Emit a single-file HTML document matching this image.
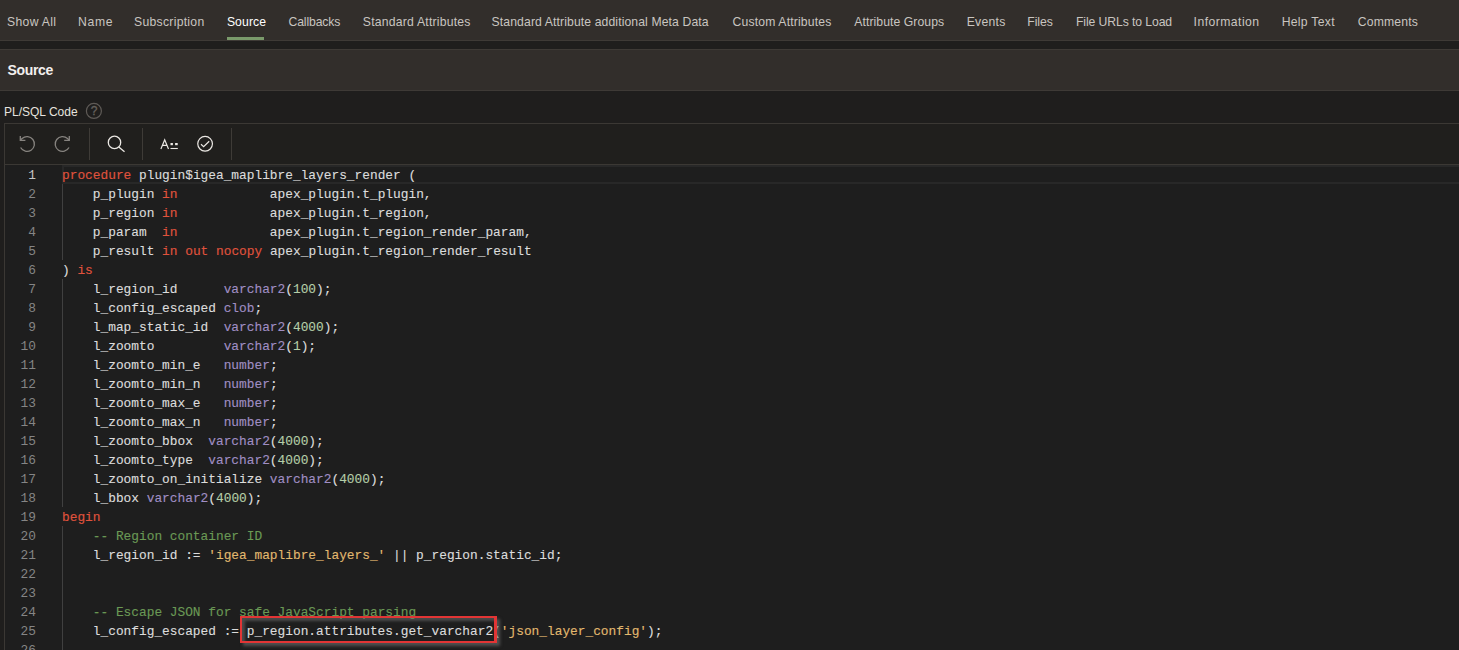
<!DOCTYPE html>
<html><head><meta charset="utf-8">
<style>
html,body{margin:0;padding:0;}
body{width:1459px;height:650px;overflow:hidden;background:#1f1e1d;position:relative;font-family:"Liberation Sans",sans-serif;}
.tabs{position:absolute;left:0;top:0;width:1459px;height:40px;background:#322e2b;border-bottom:1px solid #3e3a36;}
.tab{position:absolute;top:0;height:40px;line-height:44px;font-size:12.2px;color:#c9c5c0;white-space:pre;}
.tab.act{color:#ffffff;width:37px;}
.tab.act::after{content:"";position:absolute;left:0;right:0;top:37px;height:3px;background:#7a9a6b;}
.gap{position:absolute;left:0;top:41px;width:1459px;height:8px;background:#1f1e1d;}
.sect{position:absolute;left:0;top:49px;width:1459px;height:40px;background:#322e2b;border-top:1px solid #3e3a36;border-bottom:1px solid #3e3a36;}
.sect span{position:absolute;left:7.5px;top:0;line-height:41px;font-size:14px;letter-spacing:-0.35px;font-weight:bold;color:#f2f0ee;}
.lbl{position:absolute;left:4px;top:103px;font-size:12px;line-height:18px;color:#e6e3df;}
.help{position:absolute;left:86px;top:103px;width:16px;height:16px;}
.help span{position:absolute;left:0;right:0;top:0;text-align:center;font-size:12px;line-height:17px;color:#66625d;-webkit-text-stroke:0.3px currentColor;}
.editor{position:absolute;left:4px;top:123px;width:1460px;height:540px;border-top:1px solid #3b3834;border-left:1px solid #3b3834;background:#1e1e1e;}
.tb{position:absolute;left:0;top:0;width:100%;height:40px;background:#201f1d;border-bottom:1px solid #3b3834;}
.sep{position:absolute;top:4px;width:1px;height:32px;background:#3e3b37;}
.tb svg{position:absolute;left:0;top:0;}
.code{position:absolute;left:0;top:41px;width:100%;height:500px;}
.ln{position:absolute;left:0;margin-top:1px;width:31px;text-align:right;color:#858585;}
.code div.ln.act{color:#c6c6c6;}
.cl{position:absolute;left:57px;margin-top:1px;white-space:pre;color:#dcdcdc;-webkit-text-stroke:0.12px currentColor;}
.code div{font-family:"Liberation Mono",monospace;font-size:12.83px;height:19px;line-height:19px;}
.k{color:#e0533d}.t{color:#a08ec4}.n{color:#b5cea8}.s{color:#e2b96f}.c{color:#6a9955}
.code div.curline{position:absolute;left:57px;top:0;width:1400px;height:15px;line-height:15px;border:2px solid #282828;}
.guide{position:absolute;width:1px;background:#404040;}
.box{position:absolute;left:240px;top:616px;width:252px;height:23px;border:2.5px solid #e23535;border-right-width:3px;box-shadow:3px 3px 3px rgba(120,120,120,.55), inset 3px 3px 3px rgba(120,120,120,.5);}
</style></head><body>
<div class="tabs">
<div class="tab" style="left:7.00px;letter-spacing:0.329px">Show All</div>
<div class="tab" style="left:78.10px;letter-spacing:0.667px">Name</div>
<div class="tab" style="left:134.10px;letter-spacing:0.273px">Subscription</div>
<div class="tab act" style="left:226.90px;letter-spacing:0.100px">Source</div>
<div class="tab" style="left:288.50px;letter-spacing:-0.125px">Callbacks</div>
<div class="tab" style="left:362.80px;letter-spacing:0.222px">Standard Attributes</div>
<div class="tab" style="left:491.60px;letter-spacing:0.111px">Standard Attribute additional Meta Data</div>
<div class="tab" style="left:732.50px;letter-spacing:0.163px">Custom Attributes</div>
<div class="tab" style="left:854.30px;letter-spacing:0.073px">Attribute Groups</div>
<div class="tab" style="left:966.70px;letter-spacing:0.260px">Events</div>
<div class="tab" style="left:1027.20px;letter-spacing:0.000px">Files</div>
<div class="tab" style="left:1076.00px;letter-spacing:-0.088px">File URLs to Load</div>
<div class="tab" style="left:1193.60px;letter-spacing:0.450px">Information</div>
<div class="tab" style="left:1281.70px;letter-spacing:0.287px">Help Text</div>
<div class="tab" style="left:1357.70px;letter-spacing:0.186px">Comments</div>
</div>
<div class="gap"></div>
<div class="sect"><span>Source</span></div>
<div class="lbl">PL/SQL Code</div>
<div class="help"><span>?</span></div>
<div class="editor">
<div class="tb">
 <div class="sep" style="left:84px"></div><div class="sep" style="left:137px"></div><div class="sep" style="left:226px"></div>
 </div>
 <div class="code">
<!--CODE-->
<div class="guide" style="left:57px;top:19px;height:76px"></div><div class="guide" style="left:57px;top:114px;height:228px"></div><div class="guide" style="left:57px;top:361px;height:200px"></div>
<div class="curline"></div>
<div class="ln act" style="top:0px">1</div><div class="cl" style="top:0px"><span class="k">procedure</span> plugin$igea_maplibre_layers_render (</div>
<div class="ln" style="top:19px">2</div><div class="cl" style="top:19px">    p_plugin <span class="k">in</span>            apex_plugin.t_plugin,</div>
<div class="ln" style="top:38px">3</div><div class="cl" style="top:38px">    p_region <span class="k">in</span>            apex_plugin.t_region,</div>
<div class="ln" style="top:57px">4</div><div class="cl" style="top:57px">    p_param  <span class="k">in</span>            apex_plugin.t_region_render_param,</div>
<div class="ln" style="top:76px">5</div><div class="cl" style="top:76px">    p_result <span class="k">in</span> <span class="k">out</span> <span class="k">nocopy</span> apex_plugin.t_region_render_result</div>
<div class="ln" style="top:95px">6</div><div class="cl" style="top:95px">) <span class="k">is</span></div>
<div class="ln" style="top:114px">7</div><div class="cl" style="top:114px">    l_region_id      <span class="t">varchar2</span>(<span class="n">100</span>);</div>
<div class="ln" style="top:133px">8</div><div class="cl" style="top:133px">    l_config_escaped <span class="t">clob</span>;</div>
<div class="ln" style="top:152px">9</div><div class="cl" style="top:152px">    l_map_static_id  <span class="t">varchar2</span>(<span class="n">4000</span>);</div>
<div class="ln" style="top:171px">10</div><div class="cl" style="top:171px">    l_zoomto         <span class="t">varchar2</span>(<span class="n">1</span>);</div>
<div class="ln" style="top:190px">11</div><div class="cl" style="top:190px">    l_zoomto_min_e   <span class="t">number</span>;</div>
<div class="ln" style="top:209px">12</div><div class="cl" style="top:209px">    l_zoomto_min_n   <span class="t">number</span>;</div>
<div class="ln" style="top:228px">13</div><div class="cl" style="top:228px">    l_zoomto_max_e   <span class="t">number</span>;</div>
<div class="ln" style="top:247px">14</div><div class="cl" style="top:247px">    l_zoomto_max_n   <span class="t">number</span>;</div>
<div class="ln" style="top:266px">15</div><div class="cl" style="top:266px">    l_zoomto_bbox  <span class="t">varchar2</span>(<span class="n">4000</span>);</div>
<div class="ln" style="top:285px">16</div><div class="cl" style="top:285px">    l_zoomto_type  <span class="t">varchar2</span>(<span class="n">4000</span>);</div>
<div class="ln" style="top:304px">17</div><div class="cl" style="top:304px">    l_zoomto_on_initialize <span class="t">varchar2</span>(<span class="n">4000</span>);</div>
<div class="ln" style="top:323px">18</div><div class="cl" style="top:323px">    l_bbox <span class="t">varchar2</span>(<span class="n">4000</span>);</div>
<div class="ln" style="top:342px">19</div><div class="cl" style="top:342px"><span class="k">begin</span></div>
<div class="ln" style="top:361px">20</div><div class="cl" style="top:361px">    <span class="c">-- Region container ID</span></div>
<div class="ln" style="top:380px">21</div><div class="cl" style="top:380px">    l_region_id := <span class="s">&#x27;igea_maplibre_layers_&#x27;</span> || p_region.static_id;</div>
<div class="ln" style="top:399px">22</div><div class="cl" style="top:399px"></div>
<div class="ln" style="top:418px">23</div><div class="cl" style="top:418px"></div>
<div class="ln" style="top:437px">24</div><div class="cl" style="top:437px">    <span class="c">-- Escape JSON for safe JavaScript parsing</span></div>
<div class="ln" style="top:456px">25</div><div class="cl" style="top:456px">    l_config_escaped := p_region.attributes.get_varchar2(<span class="s">&#x27;json_layer_config&#x27;</span>);</div>
<div class="ln" style="top:475px">26</div><div class="cl" style="top:475px"></div>
<!--/CODE-->
 </div>
</div>
<svg class="icons" width="1459" height="650" viewBox="0 0 1459 650" style="position:absolute;left:0;top:0;" fill="none">
<g stroke="#86837f" stroke-width="1.3" stroke-linecap="butt" stroke-linejoin="miter">
<g transform="translate(27.2,143.9)"><path d="M-6.6 3.6 A7.35 7.35 0 1 0 -5.1 -5.3 L-6.9 -3.6"/><path d="M-6.9 -7.9 V-3.6 H-1.8"/></g>
<g transform="translate(62.4,143.9) scale(-1,1)"><path d="M-6.6 3.6 A7.35 7.35 0 1 0 -5.1 -5.3 L-6.9 -3.6"/><path d="M-6.9 -7.9 V-3.6 H-1.8"/></g>
</g>
<g stroke="#ebe8e4" stroke-width="1.3">
<circle cx="114.5" cy="142.4" r="6.2"/><path d="M118.8 147.1 L124.5 151.8"/>
<path d="M160.9 148.9 L164.7 139.7 L168.5 148.9 M162.3 145.4 H167.1" stroke-width="1.2"/>
<path d="M170.5 148.5 H177.8" stroke-width="1.1"/>
<circle cx="205.1" cy="143.8" r="7.35" stroke-width="1.2"/><path d="M201 144.3 L203.6 146.6 L209.2 141.2" stroke-width="1.2"/>
</g>
<g fill="#ebe8e4"><rect x="170.5" y="143" width="2.4" height="2.2"/><rect x="175.1" y="143" width="2.6" height="2.2"/></g>
<circle cx="93.9" cy="110.9" r="7.5" stroke="#5f5b57" stroke-width="1.2"/>
</svg>
<div class="box"></div>
</body></html>
